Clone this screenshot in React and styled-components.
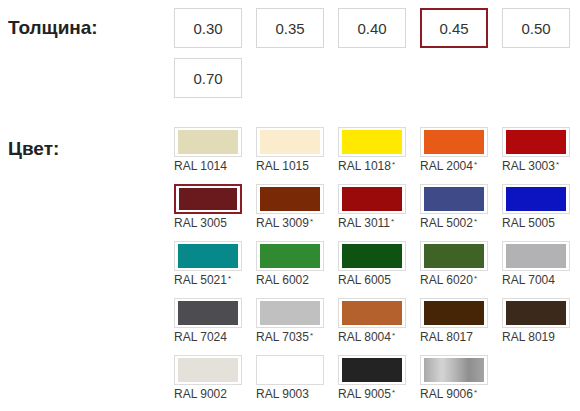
import React, { useState } from "react";
import styled, { createGlobalStyle } from "styled-components";

const Global = createGlobalStyle`
  html, body { margin: 0; padding: 0; background: #fff; }
  body { font-family: "Liberation Sans", Arial, sans-serif; color: #333; }
`;

const Page = styled.div`
  padding: 8px 0 0 8px;
  display: flex;
  flex-direction: column;
  gap: 29px;
`;

const Field = styled.div`
  display: grid;
  grid-template-columns: 166px 1fr;
  align-items: start;
`;

const Label = styled.div`
  font-weight: bold;
  font-size: 19px;
  line-height: 22px;
  color: #222;
  padding-top: ${(p) => p.$offset}px;
`;

const Options = styled.div`
  display: flex;
  flex-wrap: wrap;
  column-gap: 14px;
  row-gap: ${(p) => p.$rowGap}px;
  width: 400px;
`;

const SizeButton = styled.button`
  box-sizing: border-box;
  width: 68px;
  height: 40px;
  background: #fff;
  border: ${(p) => (p.$active ? "2px solid #8c1c24" : "1px solid #d7d7d7")};
  font-family: "Liberation Sans", Arial, sans-serif;
  font-size: 15px;
  color: #333;
  padding: 0;
  cursor: pointer;
`;

const Swatch = styled.div`
  width: 68px;
  display: flex;
  flex-direction: column;
  cursor: pointer;
`;

const Chip = styled.div`
  box-sizing: border-box;
  width: 68px;
  height: 30px;
  border: ${(p) => (p.$active ? "2px solid #8c1c24" : "1px solid #dcdcdc")};
  padding: 2px 3px;
  background: #fff;
`;

const Fill = styled.div`
  width: 100%;
  height: 100%;
  background: ${(p) => p.$color};
`;

const Caption = styled.span`
  margin-top: 2px;
  font-size: 12px;
  line-height: 14px;
  color: #3a3a3a;
  white-space: nowrap;
`;

const Star = styled.sup`
  font-size: 8px;
  vertical-align: top;
  position: relative;
  top: -1px;
  margin-left: 1px;
`;

const sizes = ["0.30", "0.35", "0.40", "0.45", "0.50", "0.70"];

const colors = [
  ["1014", "#e1dbb8", false],
  ["1015", "#fbecce", false],
  ["1018", "#ffe900", true],
  ["2004", "#e85a17", true],
  ["3003", "#b1090b", true],
  ["3005", "#6a1a1c", false],
  ["3009", "#7a2906", true],
  ["3011", "#9b0a0b", true],
  ["5002", "#3e4b88", true],
  ["5005", "#0b14c0", false],
  ["5021", "#07898b", true],
  ["6002", "#2f8a32", false],
  ["6005", "#0f5312", false],
  ["6020", "#3f6227", true],
  ["7004", "#b2b2b5", false],
  ["7024", "#4d4d51", false],
  ["7035", "#c0c0c0", true],
  ["8004", "#b4612e", true],
  ["8017", "#462507", false],
  ["8019", "#3b2a1c", false],
  ["9002", "#e3e1d9", false],
  ["9003", "#ffffff", false],
  ["9005", "#232323", true],
  [
    "9006",
    "linear-gradient(90deg, #a9a9a9 0%, #d4d4d4 30%, #b0b0b0 55%, #8e8e8e 75%, #a4a4a4 100%)",
    true,
  ],
];

export default function App() {
  const [size, setSize] = useState("0.45");
  const [color, setColor] = useState("3005");

  return (
    <>
      <Global />
      <Page>
        <Field>
          <Label $offset={9}>Толщина:</Label>
          <Options $rowGap={10}>
            {sizes.map((s) => (
              <SizeButton key={s} $active={s === size} onClick={() => setSize(s)}>
                {s}
              </SizeButton>
            ))}
          </Options>
        </Field>
        <Field>
          <Label $offset={11}>Цвет:</Label>
          <Options $rowGap={11}>
            {colors.map(([code, fill, star]) => (
              <Swatch key={code} onClick={() => setColor(code)}>
                <Chip $active={code === color}>
                  <Fill $color={fill} />
                </Chip>
                <Caption>
                  RAL {code}
                  {star && <Star>*</Star>}
                </Caption>
              </Swatch>
            ))}
          </Options>
        </Field>
      </Page>
    </>
  );
}
